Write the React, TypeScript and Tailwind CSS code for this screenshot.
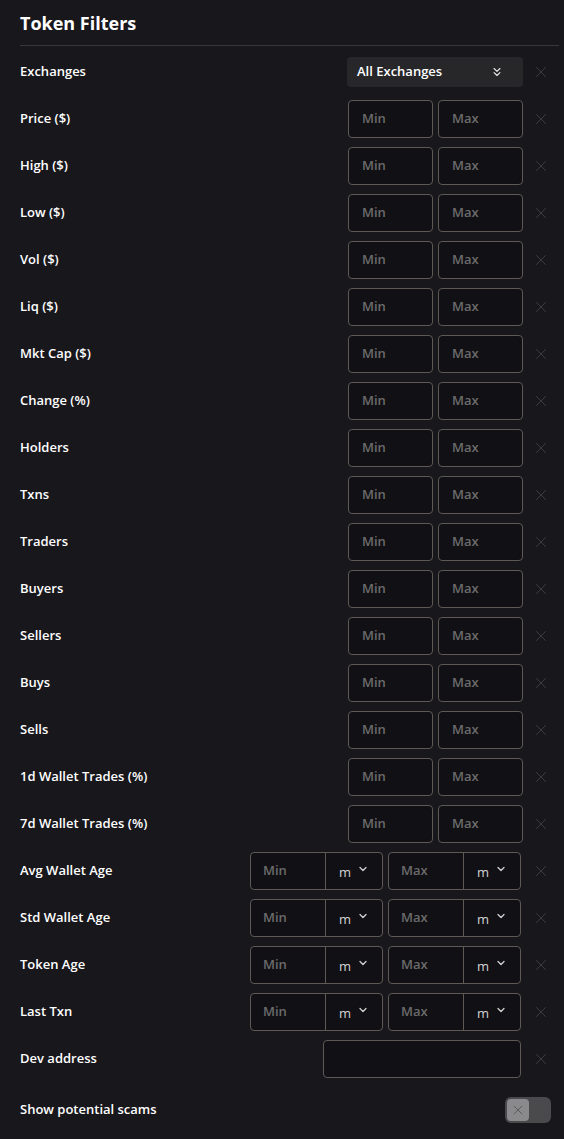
import { X, ChevronsDown, ChevronDown } from "lucide-react"

const rangeRows = [
  "Price ($)",
  "High ($)",
  "Low ($)",
  "Vol ($)",
  "Liq ($)",
  "Mkt Cap ($)",
  "Change (%)",
  "Holders",
  "Txns",
  "Traders",
  "Buyers",
  "Sellers",
  "Buys",
  "Sells",
  "1d Wallet Trades (%)",
  "7d Wallet Trades (%)",
]

const timeRows = ["Avg Wallet Age", "Std Wallet Age", "Token Age", "Last Txn"]

function ClearBtn() {
  return (
    <div className="w-9 flex items-center justify-center text-[#3d3d42]">
      <X size={18} strokeWidth={1.3} />
    </div>
  )
}

function Label({ children }: { children: React.ReactNode }) {
  return <span className="flex-1 text-[13px] font-semibold text-white">{children}</span>
}

function TimeInput({ placeholder }: { placeholder: string }) {
  return (
    <div className="flex h-full w-[133px] rounded border border-[#5e5953] bg-[#111015]">
      <div className="w-[74px] flex items-center pl-3 text-[13px] font-semibold text-[#6b6b6b]">
        {placeholder}
      </div>
      <div className="flex-1 flex items-center border-l border-[#5e5953] pl-[13px] gap-[6px] text-[#d4d4d4]">
        <span className="text-[13px] mt-[3px]">m</span>
        <ChevronDown size={12} strokeWidth={2.5} className="-mt-1" />
      </div>
    </div>
  )
}

export default function App() {
  return (
    <div
      className="min-h-[1139px] bg-[#18171c] pl-5 pr-[5px]"
      style={{ fontFamily: '"Open Sans", "Noto Sans", sans-serif' }}
    >
      <div className="pt-[9px] pb-2 border-b border-[#38373c]">
        <h1 className="text-[18px] leading-7 font-bold text-white">Token Filters</h1>
      </div>

      <div className="mt-[7px] flex flex-col gap-[9px]">
        <div className="flex items-center h-[38px]">
          <Label>Exchanges</Label>
          <div className="w-[176px] h-[30px] rounded bg-[#27272a] flex items-center justify-between pl-[10px] pr-[19px]">
            <span className="text-[13px] font-semibold text-white">All Exchanges</span>
            <ChevronsDown size={14} strokeWidth={2} className="text-[#e5e5e5]" />
          </div>
          <ClearBtn />
        </div>

        {rangeRows.map((r) => (
          <div key={r} className="flex items-center h-[38px]">
            <Label>{r}</Label>
            <div className="flex gap-[5px] h-full">
              <div className="w-[85px] rounded border border-[#5e5953] bg-[#111015] flex items-center pl-[13px] text-[13px] font-semibold text-[#6b6b6b]">
                Min
              </div>
              <div className="w-[85px] rounded border border-[#5e5953] bg-[#111015] flex items-center pl-[13px] text-[13px] font-semibold text-[#6b6b6b]">
                Max
              </div>
            </div>
            <ClearBtn />
          </div>
        ))}

        {timeRows.map((r) => (
          <div key={r} className="flex items-center h-[38px]">
            <Label>{r}</Label>
            <div className="flex gap-[5px] h-full mr-[2px]">
              <TimeInput placeholder="Min" />
              <TimeInput placeholder="Max" />
            </div>
            <ClearBtn />
          </div>
        ))}

        <div className="flex items-center h-[38px]">
          <Label>Dev address</Label>
          <div className="w-[198px] h-full mr-[2px] rounded border border-[#5e5953] bg-[#111015]" />
          <ClearBtn />
        </div>
      </div>

      <div className="flex items-center h-[26px] mt-[19px]">
        <Label>Show potential scams</Label>
        <div className="w-[46px] h-[26px] mr-[8px] rounded-md bg-[#4a4a4d] p-[2px] flex">
          <div className="w-[22px] h-[22px] rounded bg-[#8a8a8c] flex items-center justify-center text-[#5c5c5e]">
            <X size={16} strokeWidth={1.5} />
          </div>
        </div>
      </div>
    </div>
  )
}
